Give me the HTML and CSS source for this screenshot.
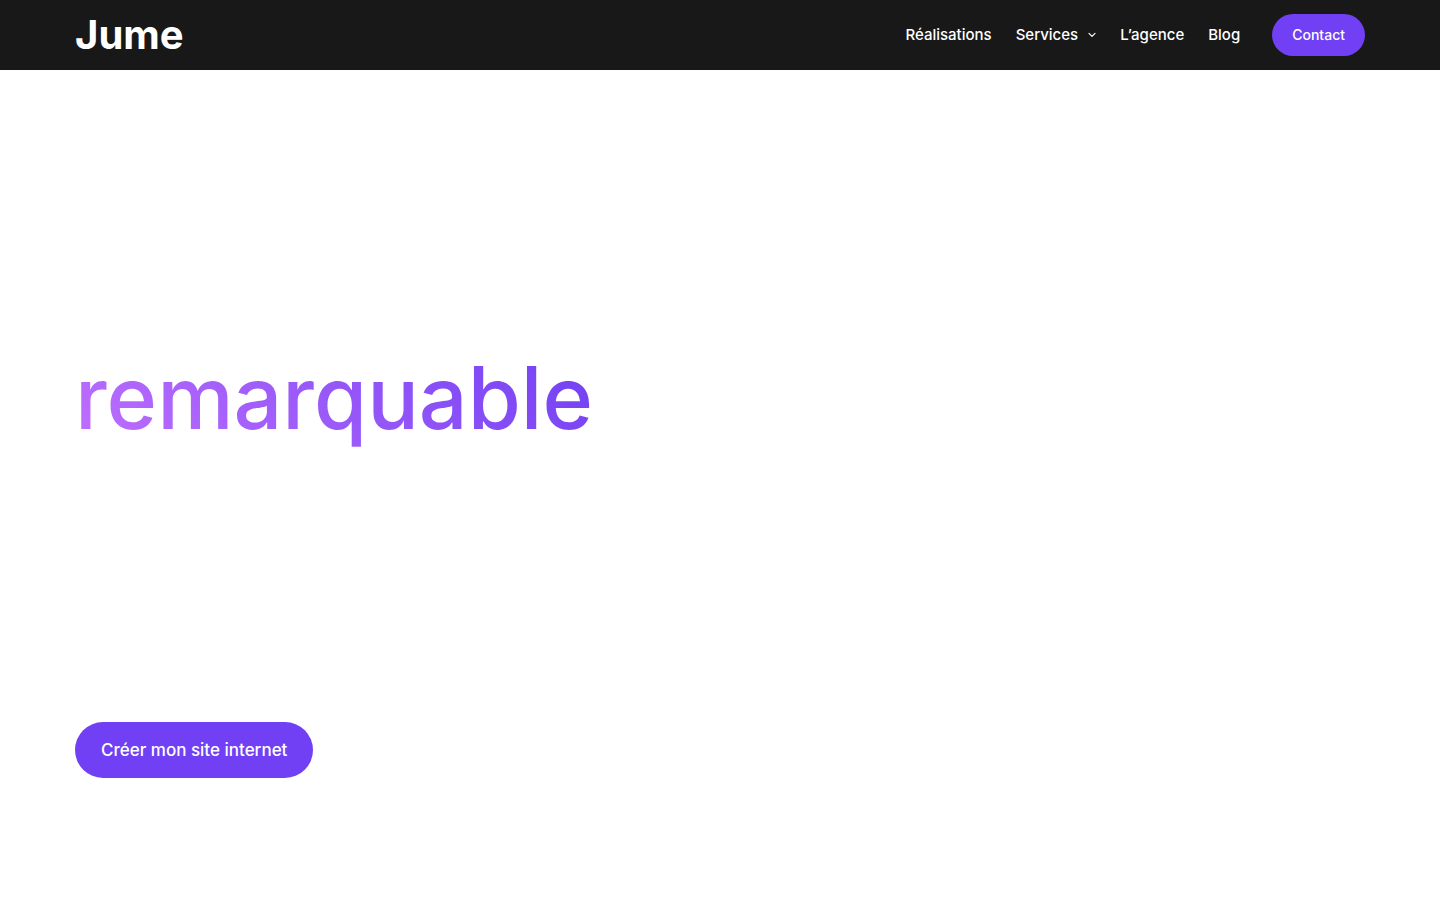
FILE: index.html
```html
<!DOCTYPE html>
<html lang="fr">
<head>
    <meta charset="UTF-8">
    <meta name="viewport" content="width=device-width, initial-scale=1.0">
    <title>Jume</title>
    <link rel="stylesheet" href="styles.css">
</head>
<body>
    <header class="header">
        <a href="#" class="logo">Jume</a>
        <nav class="nav">
            <a href="#" class="nav-link">Réalisations</a>
            <a href="#" class="nav-link">
                Services
                <svg class="chevron" viewBox="0 0 8 6" fill="none" stroke="currentColor" stroke-width="1.2" stroke-linecap="round" stroke-linejoin="round" aria-hidden="true">
                    <path d="M1 1.3l3 3 3-3"/>
                </svg>
            </a>
            <a href="#" class="nav-link">L’agence</a>
            <a href="#" class="nav-link">Blog</a>
            <a href="#" class="button button-small">Contact</a>
        </nav>
    </header>

    <main class="hero">
        <h1 class="hero-title">remarquable</h1>
        <a href="#" class="button">Créer mon site internet</a>
    </main>
</body>
</html>
```

FILE: styles.css
```css
/* Basic reset and styles */
* {
    margin: 0;
    padding: 0;
    box-sizing: border-box;
}

body {
    background-color: #fff;
    color: #fff;
    font-family: 'Inter', sans-serif;
    font-weight: 500;
}

a {
    color: inherit;
    text-decoration: none;
}

/* Top bar */
.header {
    display: flex;
    align-items: center;
    justify-content: space-between;
    height: 70px;
    padding: 0 75px;
    background-color: #181818;
}

.logo {
    font-size: 40px;
    font-weight: 700;
    line-height: 48px;
}

.nav {
    display: flex;
    align-items: center;
    gap: 24px;
}

.nav-link {
    display: flex;
    align-items: center;
    gap: 10px;
    font-size: 15px;
    line-height: 24px;
}

.chevron {
    width: 8px;
    height: 6px;
}

.button {
    padding: 16px 26px;
    border-radius: 28px;
    background-color: #7140f4;
    font-size: 17px;
    line-height: 24px;
}

.button-small {
    margin-left: 8px;
    padding: 9px 20px;
    font-size: 14px;
}

/* Hero */
.hero {
    display: flex;
    flex-direction: column;
    align-items: flex-start;
    gap: 274px;
    padding: 278px 75px 120px;
}

.hero-title {
    background: linear-gradient(45deg, #bf6fff 0%, #7040f2 100%);
    -webkit-background-clip: text;
    background-clip: text;
    color: transparent;
    font-size: 86px;
    font-weight: 500;
    line-height: 100px;
}
```
